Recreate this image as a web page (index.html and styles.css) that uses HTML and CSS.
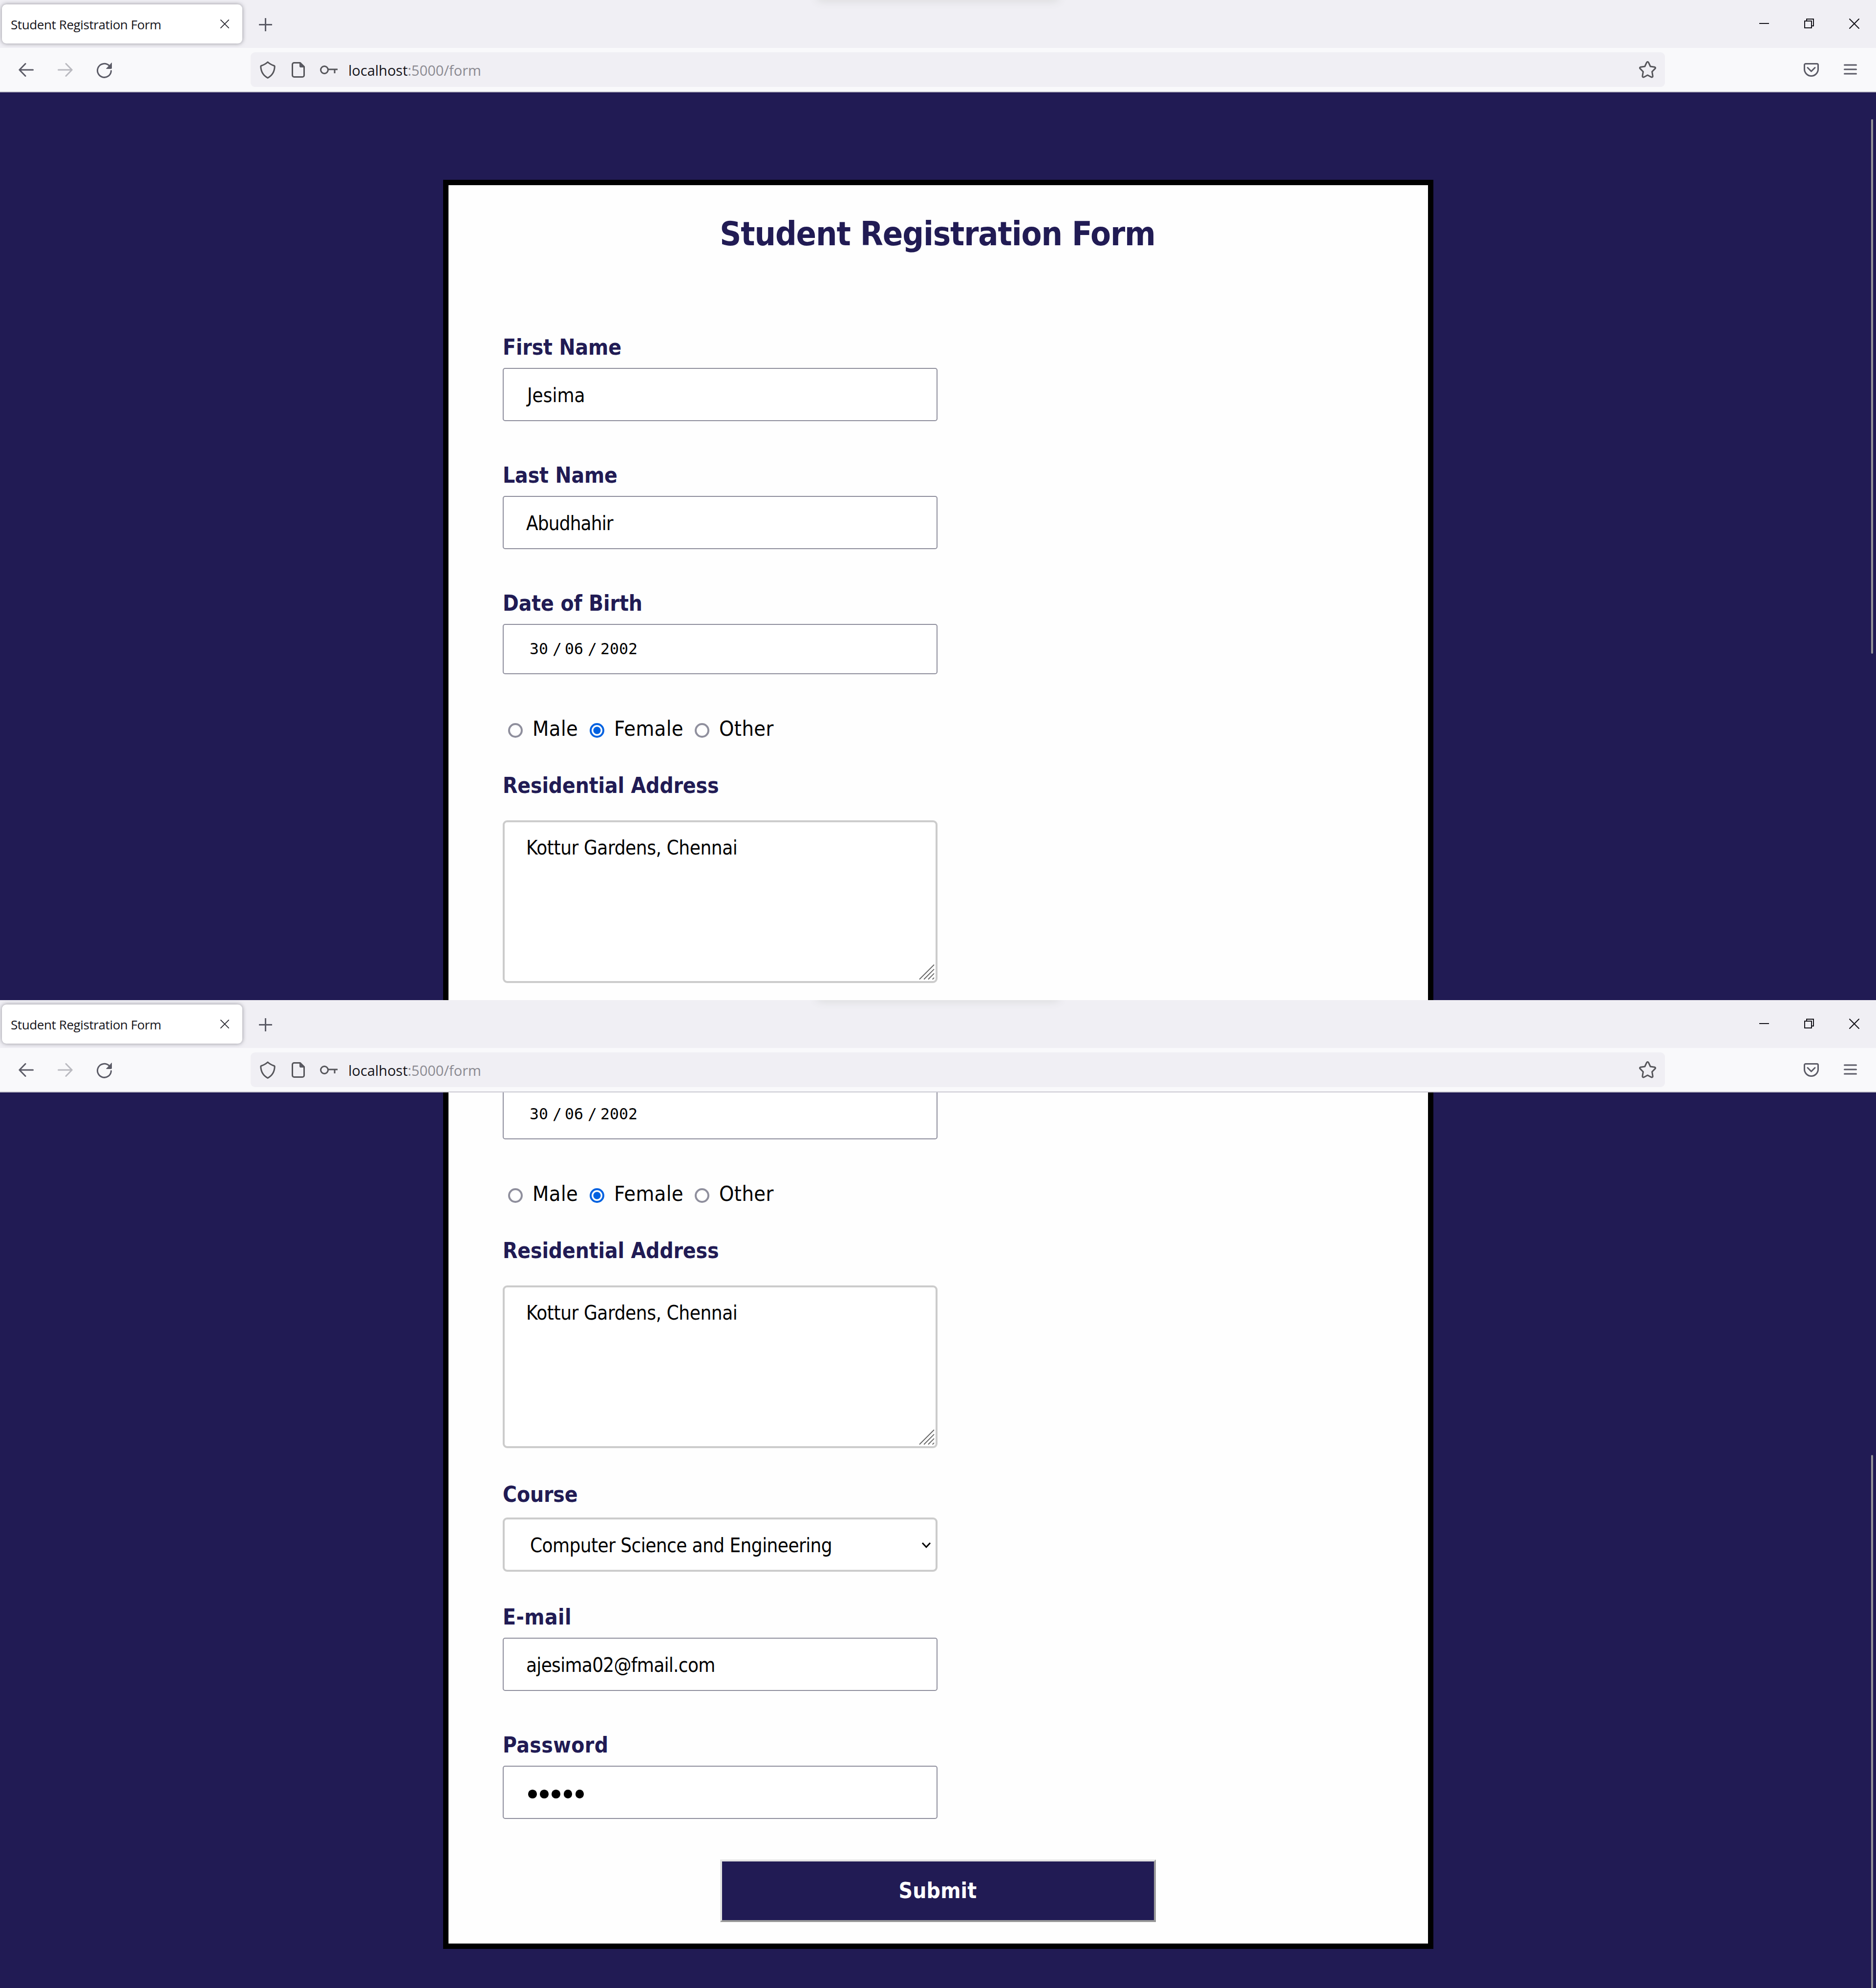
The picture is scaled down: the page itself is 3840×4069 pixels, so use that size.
FILE: index.html
```html
<!DOCTYPE html>
<html lang="en">
<head>
<meta charset="utf-8">
<title>Student Registration Form</title>
<link rel="stylesheet" href="styles.css">
</head>
<body>
<svg width="0" height="0" class="defs" aria-hidden="true">
  <symbol id="i-x" viewBox="0 0 20 20"><path d="M1 1L19 19M19 1L1 19"/></symbol>
  <symbol id="i-plus" viewBox="0 0 27 27"><path d="M13.5 1v25M1 13.5h25"/></symbol>
  <symbol id="i-restore" viewBox="0 0 20 20"><path d="M1 5h14v14H1zM5 5V1h14v14h-4"/></symbol>
  <symbol id="i-back" viewBox="0 0 31 28"><path d="M29.5 14H2M14 1.5L1.8 14L14 26.5"/></symbol>
  <symbol id="i-reload" viewBox="0 0 32 32"><path d="M29.5 17A14 14 0 1 1 25.5 6.5"/><path class="solid" d="M30.5 1v10.5a1 1 0 0 1-1 1H20z"/></symbol>
  <symbol id="i-shield" viewBox="0 0 32 36"><path d="M16 2c3.500 3.500 8.500 6 13 7.500c1 0.300 1.300 1 1.200 2c-0.400 10-4.200 17.500-14.200 23c-10-5.500-13.800-13-14.200-23c-0.100-1 0.200-1.700 1.200-2c4.500-1.500 9.500-4 13-7.500z"/></symbol>
  <symbol id="i-page" viewBox="0 0 27 32"><path d="M5 1.500h12.500l8 8V27a3.500 3.500 0 0 1-3.500 3.500H5A3.500 3.500 0 0 1 1.500 27V5A3.500 3.500 0 0 1 5 1.500z"/><path class="solid" d="M16.500 1.500l9 9h-7.500a1.500 1.500 0 0 1-1.500-1.500z"/></symbol>
  <symbol id="i-key" viewBox="0 0 36 20"><circle cx="9" cy="10" r="7.500"/><path d="M16.500 9H36M30 9v8"/></symbol>
  <symbol id="i-star" viewBox="0 0 35 35"><path d="M15.600 2.800q1.900-2.600 3.800 0l3.800 8.200l8.600 1.200q2.800 0.900 1.100 3.200l-6.300 6.300l1.500 9q0 2.900-2.700 2.300l-7.900-4.300l-7.900 4.300q-2.700 0.600-2.700-2.300l1.500-9l-6.300-6.300q-1.700-2.300 1.100-3.200l8.600-1.200z"/></symbol>
  <symbol id="i-pocket" viewBox="0 0 31 28"><path d="M4 1.500h23a2.500 2.500 0 0 1 2.500 2.500v8.500a14 14 0 0 1-28 0V4a2.500 2.500 0 0 1 2.500-2.500zM8 9.500l7.500 7.500l7.500-7.500"/></symbol>
  <symbol id="i-menu" viewBox="0 0 27 22"><path d="M1.500 2h24M1.500 11h24M1.500 20h24"/></symbol>
</svg>

<section class="window">
  <header class="tabs">
    <div class="tab"><span class="tab-title">Student Registration Form</span><svg class="ic tab-close"><use href="#i-x"/></svg></div>
    <svg class="ic plus"><use href="#i-plus"/></svg>
    <div class="controls">
      <span class="minimise"></span>
      <svg class="ic restore"><use href="#i-restore"/></svg>
      <svg class="ic close"><use href="#i-x"/></svg>
    </div>
  </header>
  <nav class="toolbar">
    <svg class="ic back"><use href="#i-back"/></svg>
    <svg class="ic back forward"><use href="#i-back"/></svg>
    <svg class="ic reload"><use href="#i-reload"/></svg>
    <div class="urlbar">
      <svg class="ic shield"><use href="#i-shield"/></svg>
      <svg class="ic page-icon"><use href="#i-page"/></svg>
      <svg class="ic key"><use href="#i-key"/></svg>
      <span class="url">localhost<span class="path">:5000/form</span></span>
      <svg class="ic star"><use href="#i-star"/></svg>
    </div>
    <svg class="ic pocket"><use href="#i-pocket"/></svg>
    <svg class="ic menu"><use href="#i-menu"/></svg>
  </nav>
  <main class="viewport viewport-top">
    <form class="card card-top">
      <h1 class="title">Student Registration Form</h1>
      <div class="field">
        <div class="label">First Name</div>
        <div class="input first">Jesima</div>
      </div>
      <div class="field">
        <div class="label">Last Name</div>
        <div class="input name">Abudhahir</div>
      </div>
      <div class="field">
        <div class="label">Date of Birth</div>
        <div class="input date"><span>30</span><span>/</span><span>06</span><span>/</span><span>2002</span></div>
      </div>
      <div class="radios">
        <div class="option"><i class="radio"></i>Male</div>
        <div class="option"><i class="radio checked"></i>Female</div>
        <div class="option"><i class="radio"></i>Other</div>
      </div>
      <div class="field address">
        <div class="label">Residential Address</div>
        <div class="textarea">Kottur Gardens, Chennai<svg class="grip" viewBox="0 0 33 33"><path d="M1 32L32 1M10.500 32L32 10.500M19.500 32L32 19.500M28.500 32l3.500-3.500"/></svg></div>
      </div>
    </form>
    <div class="scrollbar"></div>
  </main>
</section>

<section class="window">
  <header class="tabs">
    <div class="tab"><span class="tab-title">Student Registration Form</span><svg class="ic tab-close"><use href="#i-x"/></svg></div>
    <svg class="ic plus"><use href="#i-plus"/></svg>
    <div class="controls">
      <span class="minimise"></span>
      <svg class="ic restore"><use href="#i-restore"/></svg>
      <svg class="ic close"><use href="#i-x"/></svg>
    </div>
  </header>
  <nav class="toolbar">
    <svg class="ic back"><use href="#i-back"/></svg>
    <svg class="ic back forward"><use href="#i-back"/></svg>
    <svg class="ic reload"><use href="#i-reload"/></svg>
    <div class="urlbar">
      <svg class="ic shield"><use href="#i-shield"/></svg>
      <svg class="ic page-icon"><use href="#i-page"/></svg>
      <svg class="ic key"><use href="#i-key"/></svg>
      <span class="url">localhost<span class="path">:5000/form</span></span>
      <svg class="ic star"><use href="#i-star"/></svg>
    </div>
    <svg class="ic pocket"><use href="#i-pocket"/></svg>
    <svg class="ic menu"><use href="#i-menu"/></svg>
  </nav>
  <main class="viewport viewport-bottom">
    <form class="card card-bottom">
      <div class="input date cut"><span>30</span><span>/</span><span>06</span><span>/</span><span>2002</span></div>
      <div class="radios">
        <div class="option"><i class="radio"></i>Male</div>
        <div class="option"><i class="radio checked"></i>Female</div>
        <div class="option"><i class="radio"></i>Other</div>
      </div>
      <div class="field address">
        <div class="label">Residential Address</div>
        <div class="textarea">Kottur Gardens, Chennai<svg class="grip" viewBox="0 0 33 33"><path d="M1 32L32 1M10.500 32L32 10.500M19.500 32L32 19.500M28.500 32l3.500-3.500"/></svg></div>
      </div>
      <div class="field course">
        <div class="label">Course</div>
        <div class="select">Computer Science and Engineering<svg class="chevron" viewBox="0 0 20 13"><path d="M2 2l8 8.500l8-8.500"/></svg></div>
      </div>
      <div class="field email">
        <div class="label email-label">E-mail</div>
        <div class="input mail">ajesima02@fmail.com</div>
      </div>
      <div class="field">
        <div class="label password-label">Password</div>
        <div class="input password"><i class="dot"></i><i class="dot"></i><i class="dot"></i><i class="dot"></i><i class="dot"></i></div>
      </div>
      <button type="button" class="submit">Submit</button>
    </form>
    <div class="scrollbar"></div>
  </main>
</section>
</body>
</html>
```
FILE: styles.css
```css
* { box-sizing: border-box; }

body {
  margin: 0;
  width: 3840px;
  background: #211b54;
  font-family: "DejaVu Sans Condensed", "DejaVu Sans", sans-serif;
}

.defs { display: block; }

/* browser chrome */
.ic {
  display: block;
  flex: none;
  fill: none;
  stroke: #5b5b66;
  stroke-width: 3;
  stroke-linecap: round;
  stroke-linejoin: round;
}
.solid { fill: #5b5b66; stroke-width: 1; }

.tabs {
  position: relative;
  display: flex;
  align-items: center;
  height: 98px;
  padding: 0 34px 0 4px;
  background: #f0eff4;
  overflow: hidden;
}
.tabs::before {
  content: "";
  position: absolute;
  left: 1676px;
  top: -11px;
  width: 488px;
  height: 10px;
  box-shadow: 0 0 18px 2px rgba(90, 100, 80, 0.17);
}
.tab {
  display: flex;
  align-items: center;
  justify-content: space-between;
  width: 492px;
  height: 80px;
  padding: 0 27px 0 18px;
  border-radius: 9px;
  background: #fff;
  box-shadow: 0 0 8px rgba(80, 80, 90, 0.6);
}
.tab-title {
  font: 26px/36px "Open Sans", sans-serif;
  letter-spacing: -0.4px;
  color: #15141a;
  white-space: nowrap;
  padding-top: 2px;
}
.tab-close { width: 18px; height: 18px; stroke: #2b2a33; stroke-width: 2; }
.plus { width: 27px; height: 27px; margin: 2px 0 0 34px; }
.controls { display: flex; align-items: center; gap: 72px; margin-left: auto; height: 96px; padding-bottom: 2px; }
.minimise { width: 20px; height: 2px; background: #15141a; }
.restore { width: 20px; height: 20px; stroke: #15141a; stroke-width: 2; stroke-linejoin: miter; }
.close { width: 21px; height: 21px; stroke: #15141a; stroke-width: 2; }

.toolbar {
  display: flex;
  align-items: center;
  height: 91px;
  padding: 0 38px;
  border-bottom: 2px solid #cac9d2;
  background: #f9f9fb;
}
.back { width: 31px; height: 28px; margin-right: 49px; }
.forward { transform: scaleX(-1); stroke: #babac0; }
.reload { width: 32px; height: 32px; margin: 2px 283px 0 0; }
.urlbar {
  display: flex;
  align-items: center;
  width: 2895px;
  height: 71px;
  padding: 0 18px 0 19px;
  border-radius: 9px;
  background: #f0eff4;
}
.urlbar .ic { stroke: #55555a; }
.shield { width: 32px; height: 36px; margin-right: 33px; }
.page-icon { width: 27px; height: 32px; margin-right: 31px; }
.key { width: 36px; height: 20px; margin-right: 22px; stroke-linecap: butt; }
.url {
  flex: 1;
  font: 29px/40px "Open Sans", sans-serif;
  color: #15141a;
  padding-top: 3px;
  white-space: nowrap;
}
.path { color: #8b8a91; }
.star { width: 35px; height: 35px; }
.pocket { width: 31px; height: 28px; margin: 0 51px 0 284px; }
.menu { width: 27px; height: 22px; margin-bottom: 2px; }

/* page */
.viewport { position: relative; overflow: hidden; background: #211b54; }
.viewport-top { height: 1858px; padding-top: 179px; }
.viewport-bottom { height: 1833px; }
.scrollbar { position: absolute; left: 3830px; width: 4px; border-radius: 2px; background: #949496; }
.viewport-top .scrollbar { top: 55px; height: 1094px; }
.viewport-bottom .scrollbar { top: 742px; height: 1100px; }

.card {
  display: flex;
  flex-direction: column;
  width: 2027px;
  margin-left: 907px;
  padding: 0 111px;
  border: 11px solid #000;
  background: #fefefe;
}
.card-top { height: 1679px; padding-top: 60px; border-bottom: 0; }
.card-bottom { height: 1753px; border-top: 0; overflow: hidden; }

.title {
  margin: 0 0 167px;
  font-size: 68px;
  line-height: 80px;
  letter-spacing: -1.1px;
  padding-right: 3px;
  text-align: center;
  color: #211b54;
  white-space: nowrap;
}
.field { display: flex; flex-direction: column; gap: 17px; margin-bottom: 86px; }
.label {
  height: 50px;
  font-size: 44px;
  font-weight: 700;
  line-height: 50px;
  letter-spacing: -0.15px;
  color: #211b54;
  white-space: nowrap;
}
.email-label { letter-spacing: 0.4px; }
.password-label { letter-spacing: 0.4px; }
.input, .textarea, .select {
  position: relative;
  flex: none;
  width: 890px;
  font-size: 40px;
  letter-spacing: -0.5px;
  color: #000;
  background: #fff;
  white-space: nowrap;
}
.input {
  height: 109px;
  padding-left: 46px;
  border: 2px solid #8f8f9d;
  border-radius: 5px;
  line-height: 108px;
}
.first { padding-left: 48px; letter-spacing: 0; }
.name { letter-spacing: -0.87px; }
.mail { letter-spacing: -0.7px; }
.date {
  display: grid;
  grid-template-columns: 47px 25px 47px 26px auto;
  height: 103px;
  padding-left: 53px;
  font-family: "DejaVu Sans Mono", monospace;
  font-size: 31.5px;
  letter-spacing: 0;
  line-height: 99px;
}
.cut { margin: -7px 0 86px; }

.radios {
  display: grid;
  grid-template-columns: 167px 215px auto;
  height: 50px;
  margin: 0 0 67px 11px;
}
.field + .radios { margin-top: 0; }
.option {
  display: flex;
  gap: 20px;
  font-size: 43px;
  line-height: 50px;
  letter-spacing: 0.4px;
  color: #000;
}
.radio {
  width: 30px;
  height: 30px;
  margin-top: 14px;
  border: 4px solid #8f8f9d;
  border-radius: 50%;
  background: #fff;
}
.checked {
  border-color: #0061e0;
  background: radial-gradient(circle, #0061e0 7px, #fff 8px);
}

.address { gap: 46px; margin-bottom: 70px; }
.textarea {
  height: 333px;
  padding: 27px 0 0 44px;
  border: 4px solid #ccc;
  border-radius: 9px;
  line-height: 50px;
  letter-spacing: -0.42px;
}
.grip {
  position: absolute;
  right: 2px;
  bottom: 2px;
  width: 32px;
  height: 33px;
  fill: none;
  stroke: #666;
  stroke-width: 2;
}
.course { gap: 22px; margin-bottom: 68px; }
.select {
  height: 111px;
  padding-left: 52px;
  border: 4px solid #ccc;
  border-radius: 9px;
  line-height: 106px;
  letter-spacing: -0.57px;
}
.chevron {
  position: absolute;
  right: 9px;
  top: 46px;
  width: 20px;
  height: 13px;
  fill: none;
  stroke: #000;
  stroke-width: 3;
}
.email { margin-bottom: 86px; }
.password {
  display: flex;
  gap: 6.7px;
  padding: 47px 0 0 50px;
}
.dot { width: 17.5px; height: 17.5px; border-radius: 50%; background: #000; }
.submit {
  flex: none;
  align-self: center;
  width: 892px;
  height: 128px;
  margin: -3px 2px 0 0;
  padding: 0;
  border: 4px solid;
  border-color: #e3e3e3 #999 #999 #e3e3e3;
  background: #211b54;
  color: #fff;
  font: 700 44px/50px "DejaVu Sans Condensed", "DejaVu Sans", sans-serif;
  letter-spacing: 0.2px;
}
```
